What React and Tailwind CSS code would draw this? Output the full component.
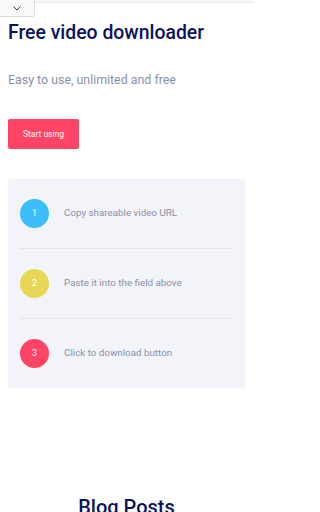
import React from 'react';

const steps = [
    { n: 1, text: 'Copy shareable video URL', color: 'bg-[#3dbefc]' },
    { n: 2, text: 'Paste it into the field above', color: 'bg-[#e8d655]' },
    { n: 3, text: 'Click to download button', color: 'bg-[#ff4465]' },
];

export default function App() {
    return (
        <div className="w-[253px] min-h-[512px] bg-white overflow-hidden" style={{ fontFamily: 'Roboto, "Liberation Sans", sans-serif' }}>
            <div className="flex items-start">
                <div className="w-[35px] h-[17px] bg-[#fafafa] border-r border-b border-[#dcdcdc] rounded-br-[3px] flex items-center justify-center">
                    <svg width="8" height="5" viewBox="0 0 8 5" fill="none">
                        <path d="M0.5 0.5 L4 4 L7.5 0.5" stroke="#333" strokeWidth="1" />
                    </svg>
                </div>
                <div className="flex-1 h-[3px] bg-[#f5f5f5] border-b border-[#ebebeb]" />
            </div>

            <div className="px-2">
                <h1 className="mt-[4px] text-[19.4px] leading-[24px] font-medium text-[#0c125e] whitespace-nowrap">Free video downloader</h1>
                <p className="mt-[25px] text-[12.4px] leading-[20px] text-[#8a90a8]">Easy to use, unlimited and free</p>
                <button className="mt-[29px] w-[71px] h-[30px] bg-[#ff4466] rounded-[2px] text-white text-[8.5px]">Start using</button>

                <div className="mt-[30px] bg-[#f2f4f9] rounded-[2px] px-3">
                    {steps.map((s, i) => (
                        <div
                            key={s.n}
                            className={`flex items-center gap-[15px] py-5 ${i < steps.length - 1 ? 'border-b border-[#e3e6ee]' : ''}`}
                        >
                            <div className={`w-[29px] h-[29px] rounded-full ${s.color} flex items-center justify-center text-white text-[9px]`}>
                                {s.n}
                            </div>
                            <span className="text-[9.8px] text-[#8a90a8]">{s.text}</span>
                        </div>
                    ))}
                </div>

                <h2 className="mt-[107px] text-center text-[20px] leading-[24px] font-medium text-[#0c125e]">Blog Posts</h2>
            </div>
        </div>
    );
}
